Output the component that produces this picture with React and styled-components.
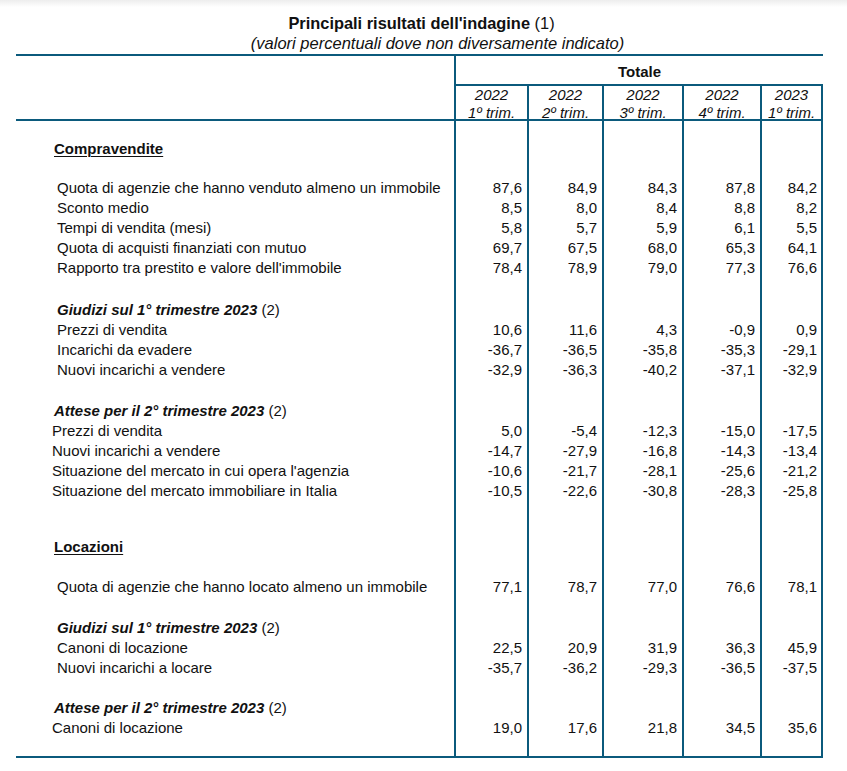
import styled, { createGlobalStyle } from "styled-components";

const BLU = "#0b5a7c";

const GlobalStyle = createGlobalStyle`
	body {
		margin: 0;
		background: linear-gradient(#ededed, #ffffff 7px) no-repeat;
		font-family: "Liberation Sans", Arial, sans-serif;
		color: #111;
	}
`;

const COLONNE = "438px 73px 75px 80px 78px 63px";

const periodi = [
	["2022", "1º trim."],
	["2022", "2º trim."],
	["2022", "3º trim."],
	["2022", "4º trim."],
	["2023", "1º trim."],
];

// tipo: sezione | gruppo | voce ; rientro = padding a sinistra ; spazio = spazio sopra
const righe = [
	{ tipo: "sezione", testo: "Compravendite", rientro: 38, spazio: 17.6 },
	{ testo: "Quota di agenzie che hanno venduto almeno un immobile", rientro: 41, spazio: 18.8, valori: ["87,6", "84,9", "84,3", "87,8", "84,2"] },
	{ testo: "Sconto medio", rientro: 41, valori: ["8,5", "8,0", "8,4", "8,8", "8,2"] },
	{ testo: "Tempi di vendita (mesi)", rientro: 41, valori: ["5,8", "5,7", "5,9", "6,1", "5,5"] },
	{ testo: "Quota di acquisti finanziati con mutuo", rientro: 41, valori: ["69,7", "67,5", "68,0", "65,3", "64,1"] },
	{ testo: "Rapporto tra prestito e valore dell'immobile", rientro: 41, valori: ["78,4", "78,9", "79,0", "77,3", "76,6"] },
	{ tipo: "gruppo", testo: "Giudizi sul 1° trimestre 2023", rientro: 41, spazio: 21 },
	{ testo: "Prezzi di vendita", rientro: 41, valori: ["10,6", "11,6", "4,3", "-0,9", "0,9"] },
	{ testo: "Incarichi da evadere", rientro: 41, valori: ["-36,7", "-36,5", "-35,8", "-35,3", "-29,1"] },
	{ testo: "Nuovi incarichi a vendere", rientro: 41, valori: ["-32,9", "-36,3", "-40,2", "-37,1", "-32,9"] },
	{ tipo: "gruppo", testo: "Attese per il 2° trimestre 2023", rientro: 38, spazio: 20.2 },
	{ testo: "Prezzi di vendita", rientro: 36, valori: ["5,0", "-5,4", "-12,3", "-15,0", "-17,5"] },
	{ testo: "Nuovi incarichi a vendere", rientro: 36, valori: ["-14,7", "-27,9", "-16,8", "-14,3", "-13,4"] },
	{ testo: "Situazione del mercato in cui opera l'agenzia", rientro: 36, valori: ["-10,6", "-21,7", "-28,1", "-25,6", "-21,2"] },
	{ testo: "Situazione del mercato immobiliare in Italia", rientro: 36, valori: ["-10,5", "-22,6", "-30,8", "-28,3", "-25,8"] },
	{ tipo: "sezione", testo: "Locazioni", rientro: 38, spazio: 35 },
	{ testo: "Quota di agenzie che hanno locato almeno un immobile", rientro: 41, spazio: 19.8, valori: ["77,1", "78,7", "77,0", "76,6", "78,1"] },
	{ tipo: "gruppo", testo: "Giudizi sul 1° trimestre 2023", rientro: 41, spazio: 20.8 },
	{ testo: "Canoni di locazione", rientro: 41, valori: ["22,5", "20,9", "31,9", "36,3", "45,9"] },
	{ testo: "Nuovi incarichi a locare", rientro: 41, valori: ["-35,7", "-36,2", "-29,3", "-36,5", "-37,5"] },
	{ tipo: "gruppo", testo: "Attese per il 2° trimestre 2023", rientro: 38, spazio: 19.4 },
	{ testo: "Canoni di locazione", rientro: 36, valori: ["19,0", "17,6", "21,8", "34,5", "35,6"] },
];

const Tabella = () => {
	return (
		<Pagina>
			<GlobalStyle />
			<Titolo>
				<b>Principali risultati dell'indagine</b> (1)
			</Titolo>
			<Sottotitolo>(valori percentuali dove non diversamente indicato)</Sottotitolo>

			<Testata>
				<Vuota />
				<Totale>Totale</Totale>
				{periodi.map(([anno, trim], i) => (
					<Periodo key={i} $ultima={i === periodi.length - 1}>
						<span>{anno}</span>
						<span>{trim}</span>
					</Periodo>
				))}
			</Testata>

			<Corpo>
				{righe.map((r, i) => (
					<Riga key={i}>
						<Etichetta $rientro={r.rientro} $spazio={r.spazio || 0} $tipo={r.tipo}>
							{r.tipo === "sezione" && <u>{r.testo}</u>}
							{r.tipo === "gruppo" && (
								<>
									<strong>{r.testo}</strong> (2)
								</>
							)}
							{!r.tipo && r.testo}
						</Etichetta>
						{[0, 1, 2, 3, 4].map((c) => (
							<Valore key={c} $spazio={r.spazio || 0} $ultima={c === 4}>
								{r.valori ? r.valori[c] : ""}
							</Valore>
						))}
					</Riga>
				))}
				<Riga>
					<Etichetta $spazio={18} $rientro={0} />
					{[0, 1, 2, 3, 4].map((c) => (
						<Valore key={c} $spazio={18} $ultima={c === 4} />
					))}
				</Riga>
			</Corpo>
		</Pagina>
	);
};

const Pagina = styled.div`
	padding: 13px 0 0 16px;
	width: 807px;
	font-size: 15px;
`;

const Titolo = styled.div`
	text-align: center;
	line-height: 20px;
	font-size: 16.4px;
	padding-left: 4px;

	b {
		font-weight: bold;
	}
`;

const Sottotitolo = styled.div`
	text-align: center;
	line-height: 20px;
	font-size: 16.5px;
	font-style: italic;
	padding-left: 36px;
	margin-bottom: 1px;
`;

const Testata = styled.div`
	display: grid;
	grid-template-columns: ${COLONNE};
	grid-template-rows: 30px 33px;
	border-top: 2px solid ${BLU};
	border-bottom: 2px solid ${BLU};
`;

const Vuota = styled.div`
	grid-row: 1 / span 2;
`;

const Totale = styled.div`
	grid-column: 2 / span 5;
	border-left: 2px solid ${BLU};
	border-bottom: 2px solid ${BLU};
	display: flex;
	align-items: center;
	justify-content: center;
	padding-top: 2px;
	font-weight: bold;
`;

const Periodo = styled.div`
	border-left: 2px solid ${BLU};
	border-right: ${(p) => (p.$ultima ? `2px solid ${BLU}` : "none")};
	display: flex;
	flex-direction: column;
	align-items: center;
	font-style: italic;
	line-height: 18px;
	margin-top: -2px;
	padding-top: 2px;
`;

const Corpo = styled.div`
	border-bottom: 2px solid ${BLU};
`;

const Riga = styled.div`
	display: grid;
	grid-template-columns: ${COLONNE};
`;

const Etichetta = styled.div`
	padding-left: ${(p) => p.$rientro}px;
	padding-top: ${(p) => p.$spazio}px;
	line-height: 20.2px;
	white-space: nowrap;

	u {
		font-weight: bold;
		text-decoration-thickness: 1px;
		text-underline-offset: 2px;
	}

	strong {
		font-weight: bold;
		font-style: italic;
	}
`;

const Valore = styled.div`
	border-left: 2px solid ${BLU};
	border-right: ${(p) => (p.$ultima ? `2px solid ${BLU}` : "none")};
	padding-top: ${(p) => p.$spazio}px;
	padding-right: ${(p) => (p.$ultima ? 4 : 5)}px;
	line-height: 20.2px;
	text-align: right;
`;

export default function App() {
	return <Tabella />;
}
